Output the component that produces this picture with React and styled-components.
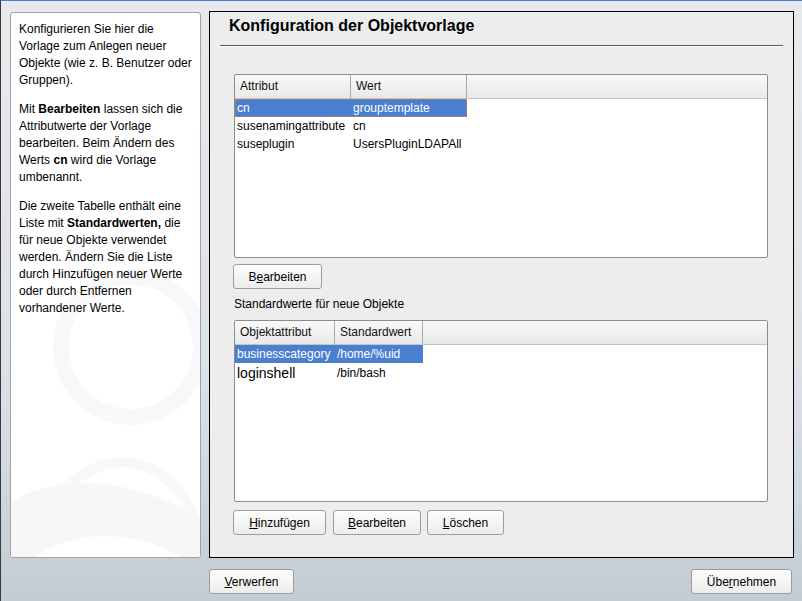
import React from 'react';
import styled, { createGlobalStyle } from 'styled-components';

const GlobalStyle = createGlobalStyle`
	html, body {
		margin: 0;
		padding: 0;
	}
	body {
		font-family: "Liberation Sans", Arial, sans-serif;
		font-size: 12px;
		color: #000;
	}
`;

const Screen = styled.div`
	width: 802px;
	height: 601px;
	box-sizing: border-box;
	border-top: 1px solid #4a7ecf;
	border-left: 1px solid #3a3a3a;
	background: linear-gradient(to bottom, #e7eaed 0%, #dde2e7 60%, #c3ccd4 100%);
	display: flex;
	flex-direction: column;
	overflow: hidden;
`;

const Main = styled.div`
	display: flex;
	gap: 8px;
	padding: 10px 8px 0 9px;
	height: 547px;
`;

const HelpPanel = styled.div`
	position: relative;
	width: 191px;
	margin-top: 1px;
	box-sizing: border-box;
	background: #fff;
	border: 1px solid #a2a2a2;
	border-radius: 3px;
	padding: 8px 8px 0 8px;
	line-height: 17px;
	overflow: hidden;
	p {
		position: relative;
		margin: 0 0 12px 0;
	}
	b {
		font-weight: bold;
	}
`;

const Watermark = styled.svg`
	position: absolute;
	left: 0;
	bottom: 0;
`;

const ContentPanel = styled.div`
	flex: 1;
	box-sizing: border-box;
	background: #ededed;
	border: 1px solid #000;
	display: flex;
	flex-direction: column;
`;

const Title = styled.h1`
	margin: 0;
	padding: 4px 0 0 19px;
	font-size: 16px;
	line-height: 20px;
	font-weight: bold;
`;

const Rule = styled.div`
	margin: 9px 10px 0 10px;
	border-top: 1px solid #5a5a5a;
	border-bottom: 1px solid #fff;
`;

const Body = styled.div`
	padding: 0 25px 0 24px;
	display: flex;
	flex-direction: column;
	align-items: flex-start;
`;

const TableBox = styled.div`
	align-self: stretch;
	margin-top: ${p => p.$top}px;
	height: ${p => p.$height}px;
	box-sizing: border-box;
	background: #fff;
	border: 1px solid #8c8c8c;
	border-radius: 2px;
	overflow: hidden;
`;

const HeaderRow = styled.div`
	display: flex;
	height: 23px;
	background: linear-gradient(to bottom, #f9f9f9, #e9e9e9);
	border-bottom: 1px solid #c4c4c4;
`;

const HeaderCell = styled.div`
	width: ${p => p.$w}px;
	flex: ${p => (p.$fill ? 1 : 'none')};
	box-sizing: border-box;
	padding-left: 5px;
	line-height: 23px;
	border-right: ${p => (p.$fill ? 'none' : '1px solid #a8a8a8')};
	color: #111;
`;

const Row = styled.div`
	display: flex;
	height: ${p => p.$h || 18}px;
	align-items: center;
	box-sizing: border-box;
	width: ${p => p.$width}px;
	background: ${p => (p.$selected ? '#4a7ecf' : 'transparent')};
	color: ${p => (p.$selected ? '#fff' : '#000')};
	outline: ${p => (p.$focus ? '1px dotted #c7882a' : 'none')};
	outline-offset: -1px;
`;

const Cell = styled.div`
	width: ${p => p.$w}px;
	padding-left: 2px;
	white-space: nowrap;
	font-size: ${p => p.$size || 12}px;
`;

const Button = styled.button`
	height: 25px;
	padding: 0;
	width: ${p => p.$w}px;
	box-sizing: border-box;
	font-family: "Liberation Sans", Arial, sans-serif;
	font-size: 12px;
	color: #000;
	background: linear-gradient(to bottom, #fdfdfd, #ececec);
	border: 1px solid #9c9c9c;
	border-radius: 3px;
	u {
		text-decoration: underline;
	}
`;

const ButtonRow = styled.div`
	display: flex;
	gap: ${p => p.$gap || 7}px;
	margin-top: ${p => p.$top}px;
	margin-left: -1px;
`;

const Label = styled.div`
	margin-top: 7px;
	line-height: 16px;
`;

const BottomBar = styled.div`
	display: flex;
	justify-content: space-between;
	padding: 11px 10px 0 208px;
`;

const App = () => {
	return (
		<>
			<GlobalStyle />
			<Screen>
				<Main>
					<HelpPanel>
						<Watermark width="189" height="330" viewBox="0 0 189 330">
							<g fill="none" stroke="#f8f8f8">
								<circle cx="120" cy="120" r="70" strokeWidth="16" />
								<path d="M15 330 C 25 270, 80 235, 110 235 C 150 235, 185 270, 189 320" strokeWidth="10" />
							</g>
							<path d="M0 275 C 40 250, 110 245, 189 290 L189 330 L0 330 Z" fill="#f7f7f7" />
							<path d="M25 330 C 55 305, 120 300, 170 330 Z" fill="#fff" />
						</Watermark>
						<p>Konfigurieren Sie hier die Vorlage zum Anlegen neuer Objekte (wie z. B. Benutzer oder Gruppen).</p>
						<p>Mit <b>Bearbeiten</b> lassen sich die Attributwerte der Vorlage bearbeiten. Beim Ändern des Werts <b>cn</b> wird die Vorlage umbenannt.</p>
						<p>Die zweite Tabelle enthält eine Liste mit <b>Standardwerten,</b> die für neue Objekte verwendet werden. Ändern Sie die Liste durch Hinzufügen neuer Werte oder durch Entfernen vorhandener Werte.</p>
					</HelpPanel>

					<ContentPanel>
						<Title>Konfiguration der Objektvorlage</Title>
						<Rule />
						<Body>
							<TableBox $top={27} $height={184}>
								<HeaderRow>
									<HeaderCell $w={116}>Attribut</HeaderCell>
									<HeaderCell $w={116}>Wert</HeaderCell>
									<HeaderCell $fill />
								</HeaderRow>
								<Row $width={232} $selected $focus>
									<Cell $w={116}>cn</Cell>
									<Cell $w={116}>grouptemplate</Cell>
								</Row>
								<Row $width={232}>
									<Cell $w={116}>susenamingattribute</Cell>
									<Cell $w={116}>cn</Cell>
								</Row>
								<Row $width={232}>
									<Cell $w={116}>suseplugin</Cell>
									<Cell $w={116}>UsersPluginLDAPAll</Cell>
								</Row>
							</TableBox>

							<ButtonRow $top={6}>
								<Button $w={89}>B<u>e</u>arbeiten</Button>
							</ButtonRow>

							<Label>Standardwerte für neue Objekte</Label>

							<TableBox $top={8} $height={182}>
								<HeaderRow>
									<HeaderCell $w={100}>Objektattribut</HeaderCell>
									<HeaderCell $w={88}>Standardwert</HeaderCell>
									<HeaderCell $fill />
								</HeaderRow>
								<Row $width={188} $selected>
									<Cell $w={100}>businesscategory</Cell>
									<Cell $w={88}>/home/%uid</Cell>
								</Row>
								<Row $width={188} $h={20}>
									<Cell $w={100} $size={14}>loginshell</Cell>
									<Cell $w={88}>/bin/bash</Cell>
								</Row>
							</TableBox>

							<ButtonRow $top={8}>
								<Button $w={93}><u>H</u>inzufügen</Button>
								<Button $w={88}><u>B</u>earbeiten</Button>
								<Button $w={77} style={{ marginLeft: -1 }}><u>L</u>öschen</Button>
							</ButtonRow>
						</Body>
					</ContentPanel>
				</Main>

				<BottomBar>
					<Button $w={85}><u>V</u>erwerfen</Button>
					<Button $w={101}>Übe<u>r</u>nehmen</Button>
				</BottomBar>
			</Screen>
		</>
	);
};

export default App;
